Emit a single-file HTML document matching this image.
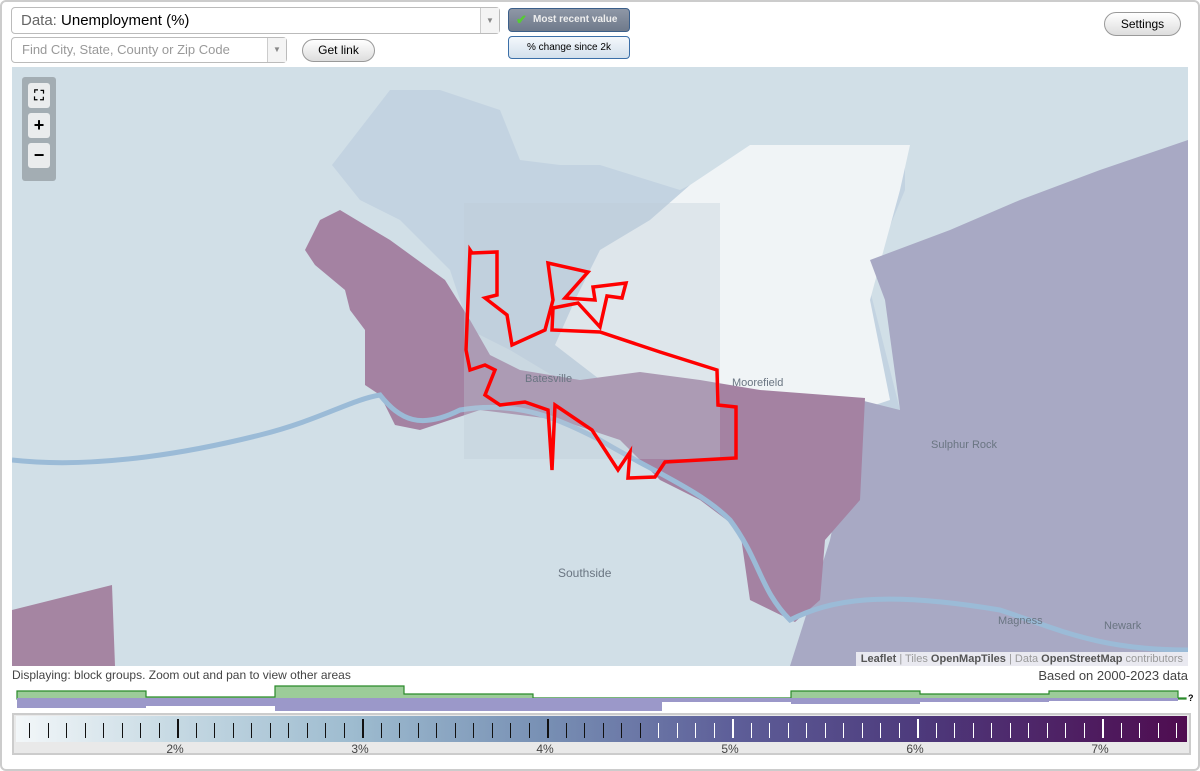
<!DOCTYPE html>
<html><head><meta charset="utf-8"><style>
*{box-sizing:border-box;margin:0;padding:0}
body{width:1200px;height:771px;background:#fff;font-family:"Liberation Sans",Arial,sans-serif;position:relative;overflow:hidden}
.frame{position:absolute;left:0;top:0;width:1200px;height:771px;border:2px solid #ccc;border-radius:6px}
.sel{position:absolute;border:1px solid #bbb;border-radius:4px;background:#fff}
.arr{position:absolute;right:0;top:0;bottom:0;width:19px;border-left:1px solid #ccc;background:#f4f4f4;color:#888;font-size:8px;text-align:center}
.btn{position:absolute;border:1px solid #999;border-radius:12px;background:linear-gradient(#fff,#ddd);font-size:12px;text-align:center}
.map{position:absolute;left:12px;top:67px;width:1176px;height:599px;background:#d1dfe7;overflow:hidden}
.zc{position:absolute;left:10px;top:10px;width:34px;height:104px;background:#a3adb3;border-radius:3px}
.zc div{position:absolute;left:6px;width:22px;height:25px;background:#eaeced;border-radius:3px;text-align:center;font-weight:bold;font-size:18px;line-height:24px}
.attr{position:absolute;right:0;bottom:0;background:rgba(255,255,255,.75);font-size:11px;color:#999;padding:1px 5px}
.attr b{color:#555;font-weight:bold}
.scale{position:absolute;left:12px;top:713px;width:1179px;height:42px;border:2px solid #ccc;background:#e9e9e9}
.grad{position:absolute;left:2px;top:1px;right:2px;height:26px;background:linear-gradient(90deg,#f3f7f9 0%,#c6d9e3 13.5%,#9dbbcf 29%,#7890b4 45%,#5e5f99 61%,#4d3a7c 77%,#4f0c50 100%)}
.t{position:absolute;top:7px;width:1px;height:15px;background:#111}
.T{position:absolute;top:3px;width:2px;height:19px;background:#111}
.lab{position:absolute;top:27px;font-size:12px;color:#444;width:30px;margin-left:-15px;text-align:center}
</style></head><body>
<div class="frame"></div>
<div class="sel" style="left:11px;top:7px;width:489px;height:27px;font-size:15px;line-height:25px;padding-left:9px"><span style="color:#666">Data:</span> Unemployment (%)<div class="arr" style="line-height:25px">▼</div></div>
<div class="sel" style="left:11px;top:37px;width:276px;height:26px;font-size:13px;line-height:24px;padding-left:10px;color:#999">Find City, State, County or Zip Code<div class="arr" style="line-height:24px">▼</div></div>
<div class="btn" style="left:302px;top:39px;width:73px;height:23px;line-height:21px">Get link</div>
<div style="position:absolute;left:508px;top:8px;width:122px;height:24px;border:1px solid #3b5f8a;border-radius:4px;background:linear-gradient(#8e97a6,#6f7a8b);color:#eee;font-size:10px;font-weight:bold;line-height:22px;padding-left:24px"><span style="position:absolute;left:7px;top:0;color:#5c3;font-size:13px">✔</span>Most recent value</div>
<div style="position:absolute;left:508px;top:36px;width:122px;height:23px;border:1px solid #3b6fa8;border-radius:4px;background:linear-gradient(#f4f8fc,#d3e0ec);font-size:10px;line-height:21px;text-align:center">% change since 2k</div>
<div class="btn" style="left:1104px;top:12px;width:77px;height:24px;line-height:22px">Settings</div>

<div class="map">
<svg width="1176" height="599" viewBox="12 67 1176 599" style="position:absolute;left:0;top:0">
<polygon points="332,165 390,90 440,90 500,110 520,160 560,165 600,165 680,190 690,185 750,145 905,145 905,190 880,250 870,290 880,330 900,410 860,400 700,380 560,380 510,350 470,330 450,270 400,220 360,200" fill="#c3d3e1"/>
<polygon points="690,185 750,145 910,145 900,190 870,300 890,400 860,410 700,390 620,395 555,345 575,300 600,250 650,220" fill="#f0f4f6"/>
<polygon points="870,260 950,230 1020,200 1100,170 1188,140 1188,666 790,666 830,540 860,400 900,410 885,300" fill="#a8a9c4"/>
<polygon points="12,610 112,585 115,666 12,666" fill="#a585a2"/>
<polygon points="340,210 390,240 445,280 470,320 490,355 520,370 580,380 640,372 700,380 760,390 865,398 860,500 825,540 820,600 795,622 750,600 740,530 700,500 660,480 620,440 560,420 480,410 420,430 395,425 380,395 365,385 365,330 350,310 345,290 315,265 305,250 320,220" fill="#a482a2"/>
<path d="M12,460 C100,470 200,450 260,435 C320,420 350,400 380,395 C400,420 420,430 460,410 C520,400 560,420 600,440 C650,470 700,490 730,520 C760,560 760,590 790,620 C830,600 880,590 1000,610 C1060,630 1100,650 1188,650" fill="none" stroke="#9bbbd7" stroke-width="5"/>
<rect x="464" y="203" width="256" height="256" fill="#bccad6" opacity=".35"/>
<path d="M472,253 L497,252 L497,295 L485,298 L507,315 L512,345 L545,330 L553,300 L548,263 L588,272 L565,298 L595,300 L593,287 L626,283 L622,298 L607,296 L600,327 L578,303 L553,308 L552,330 L600,332 L660,352 L717,370 L718,405 L736,407 L736,458 L665,462 L655,477 L628,478 L630,452 L618,470 L592,430 L555,405 L552,470 L548,410 L525,402 L500,405 L485,395 L495,370 L485,365 L470,370 L466,350 L470,250 Z" fill="none" stroke="#f00" stroke-width="3.5"/>
<g font-size="11" fill="#6a7582"><text x="525" y="382">Batesville</text><text x="732" y="386">Moorefield</text><text x="931" y="448">Sulphur Rock</text><text x="558" y="577" font-size="12">Southside</text><text x="998" y="624">Magness</text><text x="1104" y="629">Newark</text></g>
</svg>
<div class="zc"><div style="top:6px;font-size:14px">⛶</div><div style="top:36px">+</div><div style="top:66px">−</div></div>
<div class="attr"><b>Leaflet</b> | Tiles <b>OpenMapTiles</b> | Data <b>OpenStreetMap</b> contributors</div>
</div>
<div style="position:absolute;left:12px;top:668px;font-size:12px;color:#444">Displaying: block groups. Zoom out and pan to view other areas</div>
<div style="position:absolute;right:12px;top:668px;font-size:13px;color:#444">Based on 2000-2023 data</div>
<svg width="1200" height="30" style="position:absolute;left:0;top:684px">
<path d="M17,7 H146 V13 H275 V2 H404 V10 H533 V14 H791 V7 H920 V10 H1049 V7 H1178 V14 H1186 V15 H17Z" fill="#9ccc99" stroke="#2a8a2a" stroke-width="1.2"/>
<rect x="17" y="14" width="129" height="10" fill="#9b98c9"/>
<rect x="146" y="14" width="129" height="8" fill="#9b98c9"/>
<rect x="275" y="14" width="387" height="13" fill="#9b98c9"/>
<rect x="662" y="14" width="129" height="4" fill="#9b98c9"/>
<rect x="791" y="14" width="129" height="6" fill="#9b98c9"/>
<rect x="920" y="14" width="129" height="4" fill="#9b98c9"/>
<rect x="1049" y="14" width="129" height="3" fill="#9b98c9"/>
<text x="1188" y="17" font-size="9" font-weight="bold">?</text>
</svg>
<div class="scale"><div class="grad" id="g"></div>
<div class="lab" style="left:161px">2%</div><div class="lab" style="left:346px">3%</div><div class="lab" style="left:531px">4%</div><div class="lab" style="left:716px">5%</div><div class="lab" style="left:901px">6%</div><div class="lab" style="left:1086px">7%</div>
</div>
<script>
var g=document.getElementById('g');
for(var i=-8;i<=54;i++){var x=161+i*18.5;if(x<8||x>1170)continue;var d=document.createElement('div');d.className=(i%10==0)?'T':'t';d.style.left=x+'px';if(x>640)d.style.background='#fff';g.appendChild(d);}
</script>
</body></html>
